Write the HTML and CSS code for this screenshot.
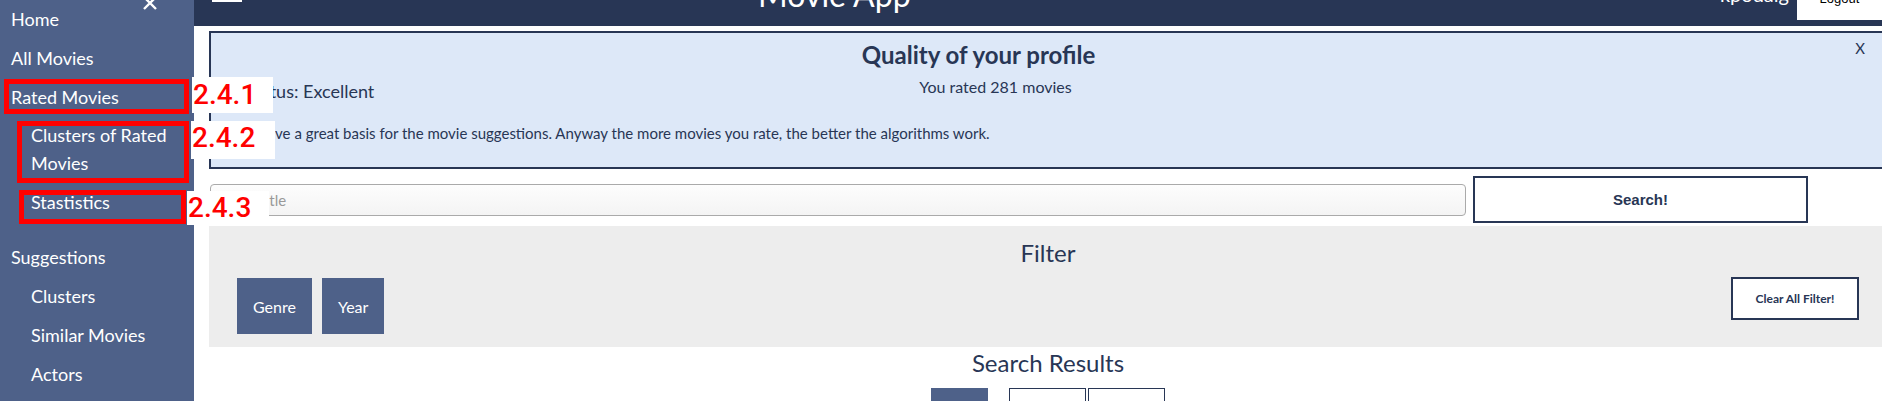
FILE: index.html
```html
<!DOCTYPE html>
<html lang="en">
<head>
<meta charset="utf-8">
<title>Movie App</title>
<link rel="stylesheet" href="styles.css">
</head>
<body>
<div class="app">
  <aside class="sidebar">
    <button class="side-close" aria-label="Close menu">
      <svg width="14" height="14" viewBox="0 0 14 14"><path d="M1 1L13 13M13 1L1 13" stroke="#fff" stroke-width="2.4" fill="none"/></svg>
    </button>
    <nav class="nav">
      <a class="item">Home</a>
      <a class="item">All Movies</a>
      <a class="item">Rated Movies</a>
      <a class="item sub">Clusters of Rated Movies</a>
      <a class="item sub">Stastistics</a>
      <a class="item section">Suggestions</a>
      <a class="item sub">Clusters</a>
      <a class="item sub">Similar Movies</a>
      <a class="item sub">Actors</a>
    </nav>
  </aside>
  <div class="main">
    <header class="topbar">
      <span class="burger"><i></i><i></i><i></i></span>
      <h1 class="title">Movie App</h1>
      <span class="user">kpodaig</span>
      <button class="logout">Logout</button>
    </header>
    <div class="content">
      <section class="alert">
        <button class="alert-close">X</button>
        <h3 class="alert-title">Quality of your profile</h3>
        <div class="alert-row">
          <div class="status">Status: Excellent</div>
          <div class="rated">You rated 281 movies</div>
        </div>
        <p class="alert-msg">You have a great basis for the movie suggestions. Anyway the more movies you rate, the better the algorithms work.</p>
      </section>
      <div class="search">
        <input class="search-input" type="text" placeholder="Movie title">
        <button class="search-btn">Search!</button>
      </div>
      <section class="filter">
        <h2 class="section-title">Filter</h2>
        <div class="filter-row">
          <button class="chip">Genre</button>
          <button class="chip">Year</button>
          <button class="clear">Clear All Filter!</button>
        </div>
      </section>
      <h2 class="section-title results">Search Results</h2>
      <div class="pager">
        <span class="page filled"></span>
        <span class="page outline first"></span>
        <span class="page outline"></span>
      </div>
    </div>
  </div>
</div>

<div class="anno-box r1"></div>
<div class="anno-box r2"></div>
<div class="anno-box r3"></div>
<div class="anno-label l1">2.4.1</div>
<div class="anno-label l2">2.4.2</div>
<div class="anno-label l3">2.4.3</div>
</body>
</html>
```
FILE: styles.css
```css
* { box-sizing: border-box; }

body {
  margin: 0;
  overflow: hidden;
  font-family: Lato, "Noto Sans", sans-serif;
  color: #283655;
  background: #fff;
}

.app {
  display: flex;
  margin-top: -34px;
  min-height: calc(100vh + 34px);
}

/* Sidebar */
.sidebar {
  position: relative;
  flex: none;
  width: 194px;
  background: #4e6189;
  color: #fff;
}

.side-close {
  position: absolute;
  top: 30px;
  right: 37px;
  width: 14px;
  height: 14px;
  padding: 0;
  border: 0;
  background: none;
}

.side-close svg { display: block; }

.nav {
  display: flex;
  flex-direction: column;
  padding-top: 34.2px;
}

.item {
  display: block;
  padding: 5.65px 11px;
  font-size: 18px;
  line-height: 27.6px;
  color: #fff;
  text-decoration: none;
}

.item.sub { padding-left: 31px; }
.item.section { margin-top: 16.4px; }

/* Main */
.main {
  flex: 1;
  min-width: 0;
  display: flex;
  flex-direction: column;
}

.topbar {
  height: 60px;
  flex: none;
  background: #283655;
  display: flex;
  align-items: flex-start;
  color: #fff;
}

.burger {
  margin: 14px 0 0 18px;
  width: 30px;
  height: 22px;
  display: flex;
  flex-direction: column;
  justify-content: space-between;
}

.burger i {
  display: block;
  height: 4px;
  background: #fff;
}

.title {
  margin: 10px 0 0 516px;
  font-size: 32px;
  font-weight: 400;
  line-height: 38.4px;
}

.user {
  margin: 16px 8px 0 auto;
  font-size: 20px;
  line-height: 24px;
}

.logout {
  margin-top: 10px;
  width: 85px;
  height: 44px;
  border: 0;
  background: #fff;
  color: #000;
  font-family: "Liberation Sans", Arial, sans-serif;
  font-size: 13px;
}

.content {
  width: 1693px;
  padding-left: 15px;
}

/* Alert */
.alert {
  position: relative;
  margin-top: 5px;
  height: 138px;
  border: 2px solid #283655;
  background: #dde8f8;
  padding-top: 8.3px;
}

.alert-close {
  position: absolute;
  top: 6px;
  right: 20px;
  padding: 0;
  border: 0;
  background: none;
  font-family: Lato, sans-serif;
  font-size: 15px;
  line-height: 18px;
  color: #283655;
}

.alert-title {
  margin: 0;
  padding-right: 139px;
  text-align: center;
  font-size: 24px;
  font-weight: 700;
  line-height: 28.8px;
}

.alert-row {
  display: flex;
  align-items: flex-start;
  margin-top: 7px;
}

.status {
  flex: none;
  width: 200px;
  margin-top: 3.5px;
  padding-left: 34px;
  font-size: 18px;
  line-height: 21.6px;
}

.rated {
  flex: 1;
  padding-right: 305px;
  text-align: center;
  font-size: 16px;
  line-height: 19.2px;
}

.alert-msg {
  margin: 22px 0 0;
  padding-left: 20px;
  font-size: 15px;
  line-height: 18px;
}

/* Search */
.search {
  display: flex;
  align-items: flex-start;
  margin-top: 7px;
}

.search-input {
  flex: none;
  width: 1256px;
  height: 32px;
  margin: 8px 0 0 1px;
  padding: 0 4px;
  border: 1px solid #aaa;
  border-radius: 4px;
  background: linear-gradient(#fdfdfd, #f4f4f4);
  font-family: Lato, sans-serif;
  font-size: 15px;
  color: #283655;
}

.search-input::placeholder { color: #999; }

.search-btn {
  flex: none;
  width: 335px;
  height: 47px;
  margin-left: 7px;
  border: 2px solid #283655;
  background: #fff;
  color: #283655;
  font-family: "Liberation Sans", Arial, sans-serif;
  font-weight: 700;
  font-size: 15px;
}

/* Filter */
.filter {
  margin-top: 3px;
  height: 121px;
  padding: 13.3px 28px 0;
  background: #ededed;
}

.section-title {
  margin: 0;
  text-align: center;
  font-size: 24px;
  font-weight: 400;
  line-height: 28.8px;
}

.filter-row {
  display: flex;
  align-items: flex-start;
  gap: 10px;
  margin-top: 9px;
}

.chip {
  height: 56px;
  margin-top: 1px;
  padding: 0 16px;
  border: 0;
  background: #4e6189;
  color: #fff;
  font-family: Lato, sans-serif;
  font-size: 16px;
}

.clear {
  margin-left: auto;
  width: 128px;
  height: 43px;
  padding: 0;
  border: 2px solid #283655;
  background: #fff;
  color: #283655;
  font-family: Lato, sans-serif;
  font-weight: 700;
  font-size: 12px;
}

.results { margin-top: 2.3px; }

.pager {
  display: flex;
  justify-content: center;
  margin-top: 10px;
}

.page {
  display: block;
  height: 40px;
}

.page.filled {
  width: 57px;
  margin-right: 21px;
  background: #4e6189;
}

.page.outline {
  width: 77px;
  border: 1px solid #283655;
  background: #fff;
}

.page.outline.first { margin-right: 2px; }

/* Annotation overlays */
.anno-box {
  position: absolute;
  border: 5px solid #ff0000;
}

.r1 { left: 4px; top: 79px; width: 185px; height: 35px; }
.r2 { left: 17px; top: 121px; width: 172px; height: 62px; }
.r3 { left: 19px; top: 190px; width: 167px; height: 34px; }

.anno-label {
  position: absolute;
  display: flex;
  align-items: center;
  padding-left: 1px;
  background: #fff;
  color: #ff0000;
  font-family: Roboto, "Liberation Sans", sans-serif;
  font-weight: 500;
  font-size: 28px;
  line-height: 1;
}

.l1 { left: 192px; top: 77px; width: 81px; height: 36px; }
.l2 { left: 191px; top: 121px; width: 84px; height: 38px; padding-bottom: 4px; }
.l3 { left: 187px; top: 191px; width: 82px; height: 34px; }
```
